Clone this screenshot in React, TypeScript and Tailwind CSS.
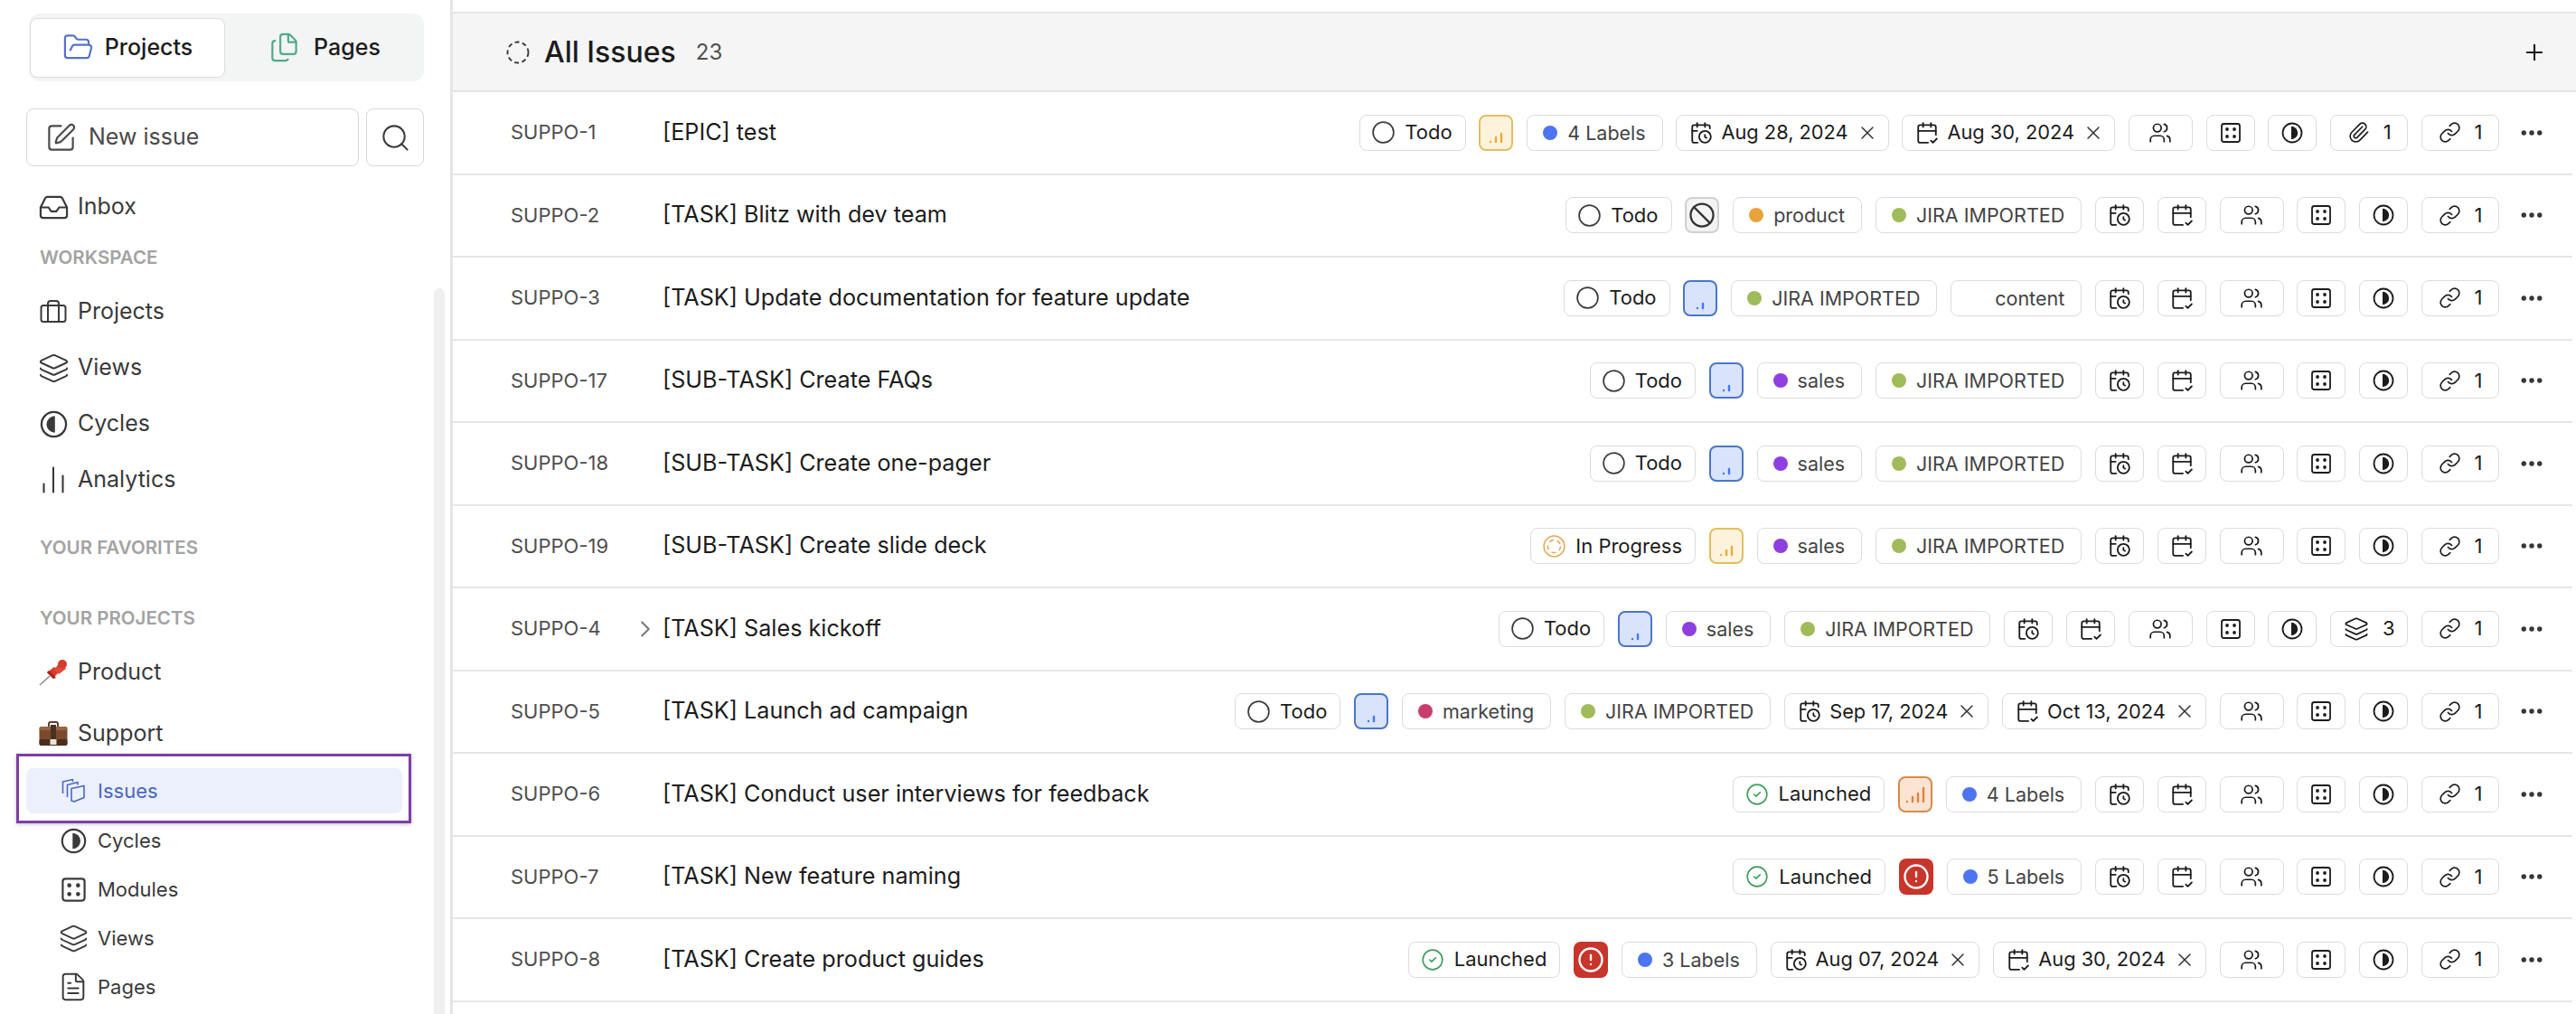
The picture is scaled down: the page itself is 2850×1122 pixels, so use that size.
import React from "react";
import {
  Ban,
  CalendarCheck2,
  CalendarClock,
  ChartNoAxesColumn,
  ChevronRight,
  CircleAlert,
  CircleCheck,
  Ellipsis,
  Files,
  FileText,
  FolderOpen,
  Inbox,
  Layers,
  Link,
  Paperclip,
  Plus,
  Search,
  SquarePen,
  Users,
  X,
} from "lucide-react";

function CycleIcon({ size = 24, left = false }: { size?: number; left?: boolean }) {
  return (
    <svg width={size} height={size} viewBox="0 0 24 24" fill="none" className="shrink-0">
      <circle cx="12" cy="12" r="10.5" stroke="currentColor" strokeWidth="1.8" />
      <path d={left ? "M13 4.8a7.2 7.2 0 0 0 0 14.4z" : "M11 4.8a7.2 7.2 0 0 1 0 14.4z"} fill="currentColor" />
    </svg>
  );
}

function ModuleIcon({ size = 24 }: { size?: number }) {
  return (
    <svg width={size} height={size} viewBox="0 0 24 24" fill="none" className="shrink-0">
      <rect x="2" y="2" width="20" height="20" rx="2.5" stroke="currentColor" strokeWidth="1.8" />
      <circle cx="8" cy="8" r="1.9" fill="currentColor" />
      <circle cx="16" cy="8" r="1.9" fill="currentColor" />
      <circle cx="8" cy="16" r="1.9" fill="currentColor" />
      <circle cx="16" cy="16" r="1.9" fill="currentColor" />
    </svg>
  );
}

function BriefcaseIcon() {
  return (
    <svg width="30" height="30" viewBox="0 0 30 30" fill="none" stroke="currentColor" strokeWidth="2" className="shrink-0">
      <rect x="1.5" y="8" width="27" height="18" rx="2.5" />
      <path d="M9 26V6a3 3 0 0 1 3-3h6a3 3 0 0 1 3 3v20" />
    </svg>
  );
}

function IssuesIcon() {
  return (
    <svg width="28" height="28" viewBox="0 0 28 28" fill="none" stroke="currentColor" strokeWidth="1.6" strokeLinejoin="round" className="shrink-0">
      <path d="M12 11.5l14-3v13l-11 4.5-3-1z" />
      <path d="M7.5 21V7.5L19 4.5v3" />
      <path d="M2.5 17V4l11-2.5V4" />
    </svg>
  );
}

function PinEmoji() {
  return (
    <svg width="32" height="30" viewBox="0 0 32 30" className="shrink-0">
      <path d="M1 29l11-10" stroke="#8d8d8d" strokeWidth="1.6" />
      <path d="M17 9l-8 6 7 7 7-9z" fill="#d93a2b" />
      <path d="M9 15l7 7 3-1-8-8z" fill="#a5231a" />
      <path d="M17 12l6-8 7 7-8 6z" fill="#e0493a" />
      <circle cx="26" cy="6" r="5" fill="#d93a2b" />
    </svg>
  );
}

function CaseEmoji() {
  return (
    <svg width="32" height="28" viewBox="0 0 32 28" className="shrink-0">
      <path d="M11 7V3a2 2 0 0 1 2-2h6a2 2 0 0 1 2 2v4" fill="none" stroke="#5d4033" strokeWidth="2" />
      <rect x="0.5" y="6" width="31" height="21" rx="2.5" fill="#7a4a2e" />
      <rect x="0.5" y="6" width="31" height="4" rx="2" fill="#9a6642" />
      <rect x="0.5" y="20" width="31" height="7" rx="2" fill="#4d2c1a" />
      <rect x="13" y="4" width="6" height="18" fill="#4a3024" />
      <rect x="12.5" y="20" width="7" height="6" fill="#ece3d0" />
    </svg>
  );
}

function SignalBars({ level, className }: { level: 1 | 2 | 3; className: string }) {
  const bars = [
    [1, "M3 20h.01"],
    [1, "M9 20v-5"],
    [2, "M15 20v-9"],
    [3, "M21 20v-15"],
  ] as const;
  const shift = level === 1 ? 6 : level === 2 ? 3 : 0;
  return (
    <svg width="24" height="24" viewBox="0 0 24 24" fill="none" stroke="currentColor" strokeWidth="2.4" strokeLinecap="round" className={className}>
      <g transform={`translate(${shift} 0)`}>
        {bars.filter(([min]) => min <= level).map(([, d]) => (
          <path key={d} d={d} />
        ))}
      </g>
    </svg>
  );
}

function Priority({ kind }: { kind: string }) {
  if (kind === "urgent") {
    return (
      <div className="w-[38px] h-10 rounded-lg bg-[#c8352b] flex items-center justify-center text-white shrink-0">
        <CircleAlert size={30} strokeWidth={1.9} />
      </div>
    );
  }
  if (kind === "none") {
    return (
      <div className="w-[38px] h-10 rounded-lg bg-[#f3f3f3] border-2 border-[#d0d0d0] flex items-center justify-center text-[#333333] shrink-0">
        <Ban size={30} strokeWidth={1.8} className="shrink-0" />
      </div>
    );
  }
  if (kind === "low") {
    return (
      <div className="w-[38px] h-10 rounded-lg bg-[#d9e3fb] border-2 border-[#4a76c9] flex items-center justify-center shrink-0">
        <SignalBars level={1} className="text-[#3f76ff] mt-[6px]" />
      </div>
    );
  }
  if (kind === "medium") {
    return (
      <div className="w-[38px] h-10 rounded-lg bg-[#fdf3dc] border-2 border-[#e5bd5f] flex items-center justify-center shrink-0">
        <SignalBars level={2} className="text-[#e8ac35] mt-[4px]" />
      </div>
    );
  }
  return (
    <div className="w-[38px] h-10 rounded-lg bg-[#fbe4d3] border-2 border-[#d98a48] flex items-center justify-center shrink-0">
      <SignalBars level={3} className="text-[#e5803a]" />
    </div>
  );
}

function Chip({ children, className = "" }: { children: React.ReactNode; className?: string }) {
  return (
    <div className={`h-10 shrink-0 rounded-lg border border-[#dcdcdc] bg-white flex items-center whitespace-nowrap ${className}`}>
      {children}
    </div>
  );
}

function StateChip({ state }: { state: string }) {
  return (
    <Chip className="pl-[13px] pr-[14px] gap-[11px] text-[22px] text-[#1c1c1c]">
      {state === "Todo" && (
        <svg width="25" height="25" viewBox="0 0 25 25" fill="none" className="shrink-0">
          <circle cx="12.5" cy="12.5" r="11.4" stroke="#3c3c3c" strokeWidth="1.7" />
        </svg>
      )}
      {state === "In Progress" && (
        <svg width="25" height="25" viewBox="0 0 25 25" fill="none" className="shrink-0">
          <circle cx="12.5" cy="12.5" r="11.4" stroke="#e2a54f" strokeWidth="1.5" />
          <circle cx="12.5" cy="12.5" r="7" stroke="#e2a54f" strokeWidth="1.5" strokeDasharray="5 4" />
        </svg>
      )}
      {state === "Launched" && <CircleCheck size={26} strokeWidth={1.5} className="text-[#3f9e5d] shrink-0" />}
      {state}
    </Chip>
  );
}

function LabelChip({ text, dot }: { text: string; dot: string }) {
  return (
    <Chip className={`pr-[18px] gap-[11px] text-[21.5px] text-[#444444] ${dot === "bg-white" ? "pl-[21px]" : "pl-[17px]"}`}>
      <span className={`w-4 h-4 rounded-full shrink-0 ${dot}`} />
      {text}
    </Chip>
  );
}

function DateChip({ text, due }: { text: string; due?: boolean }) {
  const Icon = due ? CalendarCheck2 : CalendarClock;
  return (
    <Chip className="pl-[14px] pr-[11px] text-[21.8px] text-[#1c1c1c]">
      <Icon size={26} strokeWidth={1.7} className="shrink-0 mr-[9px]" />
      {text}
      <X size={24} strokeWidth={1.5} className="ml-[9px] text-[#333333] shrink-0" />
    </Chip>
  );
}

function IconChip({ children, wide }: { children: React.ReactNode; wide?: boolean }) {
  return <Chip className={`justify-center text-[#1c1c1c] ${wide ? "w-[71px]" : "w-[54px]"}`}>{children}</Chip>;
}

function CountChip({ children, n }: { children: React.ReactNode; n: number }) {
  return (
    <Chip className="w-[86px] justify-center gap-[15px] text-[22px] text-[#1c1c1c]">
      {children}
      {n}
    </Chip>
  );
}

type Issue = {
  id: string;
  title: string;
  state: string;
  priority: string;
  labels: [string, string][];
  start?: string;
  due?: string;
  attach?: number;
  sub?: number;
  expand?: boolean;
};

const JIRA: [string, string] = ["JIRA IMPORTED", "bg-[#a0bc5a]"];
const SALES: [string, string] = ["sales", "bg-[#8e3fe0]"];
const BLUE = "bg-[#4d75f2]";

const issues: Issue[] = [
  { id: "SUPPO-1", title: "[EPIC] test", state: "Todo", priority: "medium", labels: [["4 Labels", BLUE]], start: "Aug 28, 2024", due: "Aug 30, 2024", attach: 1 },
  { id: "SUPPO-2", title: "[TASK] Blitz with dev team", state: "Todo", priority: "none", labels: [["product", "bg-[#e8a33d]"], JIRA] },
  { id: "SUPPO-3", title: "[TASK] Update documentation for feature update", state: "Todo", priority: "low", labels: [JIRA, ["content", "bg-white"]] },
  { id: "SUPPO-17", title: "[SUB-TASK] Create FAQs", state: "Todo", priority: "low", labels: [SALES, JIRA] },
  { id: "SUPPO-18", title: "[SUB-TASK] Create one-pager", state: "Todo", priority: "low", labels: [SALES, JIRA] },
  { id: "SUPPO-19", title: "[SUB-TASK] Create slide deck", state: "In Progress", priority: "medium", labels: [SALES, JIRA] },
  { id: "SUPPO-4", title: "[TASK] Sales kickoff", state: "Todo", priority: "low", labels: [SALES, JIRA], sub: 3, expand: true },
  { id: "SUPPO-5", title: "[TASK] Launch ad campaign", state: "Todo", priority: "low", labels: [["marketing", "bg-[#c93d6e]"], JIRA], start: "Sep 17, 2024", due: "Oct 13, 2024" },
  { id: "SUPPO-6", title: "[TASK] Conduct user interviews for feedback", state: "Launched", priority: "high", labels: [["4 Labels", BLUE]] },
  { id: "SUPPO-7", title: "[TASK] New feature naming", state: "Launched", priority: "urgent", labels: [["5 Labels", BLUE]] },
  { id: "SUPPO-8", title: "[TASK] Create product guides", state: "Launched", priority: "urgent", labels: [["3 Labels", BLUE]], start: "Aug 07, 2024", due: "Aug 30, 2024" },
];

function IssueRow({ issue }: { issue: Issue }) {
  return (
    <div className="h-[91.5px] border-b-2 border-[#e6e6e6] flex items-center pl-[64px] pr-[30px] mr-[4px]">
      <div className="w-[168px] shrink-0 flex items-center text-[22px] text-[#4f4f4f]">
        {issue.id}
        {issue.expand && <ChevronRight size={30} strokeWidth={1.6} className="ml-auto mr-[4px] text-[#777777]" />}
      </div>
      <div className="text-[25.2px] text-[#1c1c1c] whitespace-nowrap">{issue.title}</div>
      <div className="ml-auto flex items-center gap-[14.8px]">
        <StateChip state={issue.state} />
        <Priority kind={issue.priority} />
        {issue.labels.map(([text, dot]) => (
          <LabelChip key={text} text={text} dot={dot} />
        ))}
        {issue.start ? (
          <DateChip text={issue.start} />
        ) : (
          <IconChip>
            <CalendarClock size={26} strokeWidth={1.7} />
          </IconChip>
        )}
        {issue.due ? (
          <DateChip text={issue.due} due />
        ) : (
          <IconChip>
            <CalendarCheck2 size={26} strokeWidth={1.7} />
          </IconChip>
        )}
        <IconChip wide>
          <Users size={26} strokeWidth={1.6} />
        </IconChip>
        <IconChip>
          <ModuleIcon />
        </IconChip>
        <IconChip>
          <CycleIcon />
        </IconChip>
        {issue.attach && (
          <CountChip n={issue.attach}>
            <Paperclip size={25} strokeWidth={1.6} />
          </CountChip>
        )}
        {issue.sub && (
          <CountChip n={issue.sub}>
            <Layers size={28} strokeWidth={1.5} />
          </CountChip>
        )}
        <CountChip n={1}>
          <Link size={25} strokeWidth={1.6} />
        </CountChip>
      </div>
      <Ellipsis size={30} strokeWidth={2.3} className="ml-[21px] text-[#333333] shrink-0" />
    </div>
  );
}

function NavItem({ icon, label, className = "h-[62px]" }: { icon: React.ReactNode; label: string; className?: string }) {
  return (
    <div className={`pl-[44px] flex items-center gap-[12px] text-[25px] text-[#3a3a3a] ${className}`}>
      <span className="w-[30px] flex justify-center shrink-0">{icon}</span>
      {label}
    </div>
  );
}

function SubItem({ icon, label }: { icon: React.ReactNode; label: string }) {
  return (
    <div className="h-9 pl-[67px] flex items-center gap-[13px] text-[22px] text-[#3a3a3a]">
      <span className="w-[28px] flex justify-center shrink-0">{icon}</span>
      {label}
    </div>
  );
}

function GroupTitle({ children, className = "" }: { children: React.ReactNode; className?: string }) {
  return <div className={`h-6 pl-[44px] flex items-center text-[20.5px] font-semibold text-[#a3a3a3] ${className}`}>{children}</div>;
}

function Sidebar() {
  return (
    <aside className="relative w-[498px] h-full shrink-0 overflow-hidden pt-[15px]">
      <div className="ml-[32px] w-[437px] h-[75px] rounded-xl bg-[#f3f4f4] flex items-center">
        <div className="w-[216px] h-[66px] ml-px rounded-lg bg-white border border-[#dcdcdc] flex items-center justify-center gap-[12px] text-[25px] font-medium text-[#1c1c1c]">
          <FolderOpen size={35} strokeWidth={1.5} className="text-[#5572c9] shrink-0" />
          Projects
        </div>
        <div className="flex-1 flex items-center justify-center gap-[15px] text-[25px] font-medium text-[#1c1c1c]">
          <Files size={35} strokeWidth={1.5} className="text-[#55a98a] shrink-0" />
          Pages
        </div>
      </div>

      <div className="mt-[30px] ml-[29px] flex gap-2">
        <div className="w-[368px] h-16 rounded-lg border border-[#d8d8d8] flex items-center pl-[20px] gap-[13px] text-[25px] text-[#4a4a4a]">
          <SquarePen size={35} strokeWidth={1.5} className="shrink-0" />
          New issue
        </div>
        <div className="w-[64px] h-16 rounded-lg border border-[#d8d8d8] flex items-center justify-center text-[#3a3a3a]">
          <Search size={35} strokeWidth={1.4} className="shrink-0" />
        </div>
      </div>

      <NavItem icon={<Inbox size={35} strokeWidth={1.5} className="shrink-0" />} label="Inbox" className="h-[62px] mt-[14px]" />
      <GroupTitle className="mt-[13px]">WORKSPACE</GroupTitle>
      <div className="mt-[17px]">
        <NavItem icon={<BriefcaseIcon />} label="Projects" />
        <NavItem icon={<Layers size={35} strokeWidth={1.4} className="shrink-0" />} label="Views" />
        <NavItem icon={<CycleIcon size={31} left />} label="Cycles" />
        <NavItem icon={<ChartNoAxesColumn size={36} strokeWidth={1.4} className="shrink-0" />} label="Analytics" />
      </div>
      <GroupTitle className="mt-[32px]">YOUR FAVORITES</GroupTitle>
      <GroupTitle className="mt-[54px]">YOUR PROJECTS</GroupTitle>
      <NavItem icon={<PinEmoji />} label="Product" className="h-[62px] mt-[17px]" />
      <NavItem icon={<CaseEmoji />} label="Support" className="h-[44px] mt-[15px]" />

      <div className="ml-[18px] w-[437px] h-[77px] border-[3px] border-[#7d3fa8] shadow-[0_1px_4px_rgba(0,0,0,0.25)] pt-[13px] pr-[7px] pb-[8px] pl-2">
        <div className="h-full rounded-lg bg-[#ebf0fc] pl-[38px] flex items-center gap-[13px] text-[22px] text-[#4a68c4]">
          <IssuesIcon />
          Issues
        </div>
      </div>
      <div className="mt-px flex flex-col gap-[18px]">
        <SubItem icon={<CycleIcon size={29} />} label="Cycles" />
        <SubItem icon={<ModuleIcon size={29} />} label="Modules" />
        <SubItem icon={<Layers size={33} strokeWidth={1.4} className="shrink-0" />} label="Views" />
        <SubItem icon={<FileText size={34} strokeWidth={1.4} className="shrink-0" />} label="Pages" />
      </div>

      <div className="absolute left-[480px] top-[319px] bottom-0 w-3 rounded-t-md bg-[#efefef]" />
    </aside>
  );
}

export default function App() {
  return (
    <div className="w-[2850px] h-[1122px] overflow-hidden bg-white flex font-['Inter',sans-serif]">
      <Sidebar />
      <main className="flex-1 min-w-0 h-full border-l-[3px] border-[#e6e6e6] pt-[13px]">
        <div className="h-[89px] bg-[#f5f5f5] border-y-2 border-[#e6e6e6] flex items-center pl-[59px] pr-[32px]">
          <svg width="26" height="26" viewBox="0 0 26 26" fill="none" className="shrink-0">
            <circle cx="13" cy="13" r="11.5" stroke="#333333" strokeWidth="1.8" strokeDasharray="5 3.4" />
          </svg>
          <span className="ml-[16px] text-[32px] font-medium text-[#1c1c1c]">All Issues</span>
          <span className="ml-[22px] text-[24px] text-[#4f4f4f]">23</span>
          <Plus size={28} strokeWidth={1.8} className="ml-auto text-[#1c1c1c]" />
        </div>
        {issues.map((issue) => (
          <IssueRow key={issue.id} issue={issue} />
        ))}
      </main>
    </div>
  );
}
